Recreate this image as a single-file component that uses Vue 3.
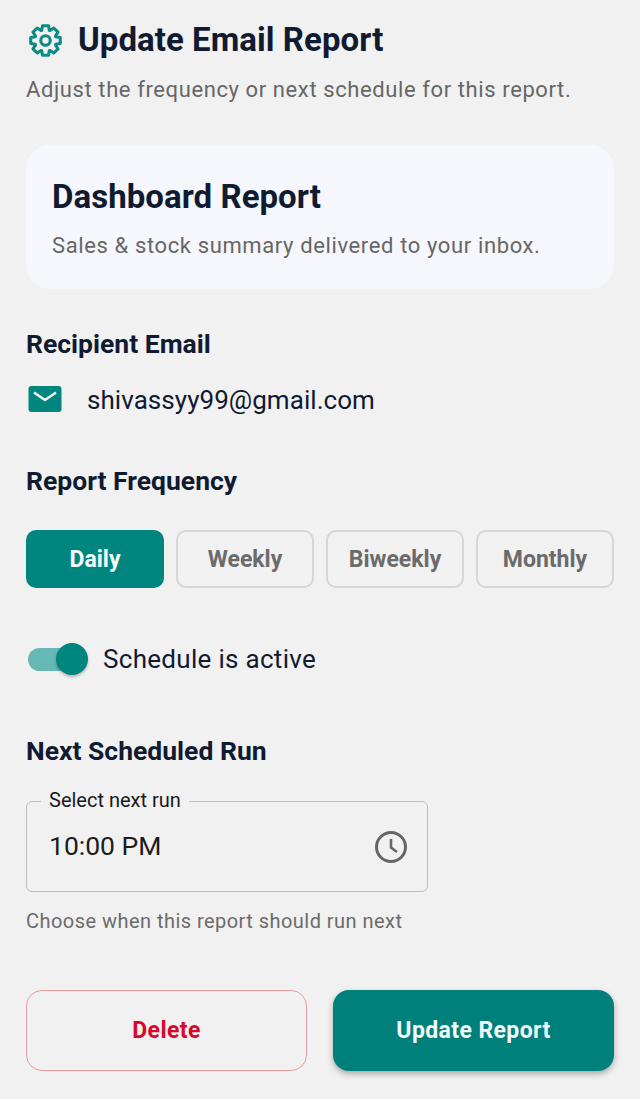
<script setup>
import { ref } from 'vue';

const frequencies = ref(['Daily', 'Weekly', 'Biweekly', 'Monthly']);
const selected = ref('Daily');

// 8 squarish teeth round the centre of a 34 x 34 box
const gearPoints = Array.from({ length: 8 }, (_, i) => {
  const a = (i * Math.PI) / 4;
  return [
    [-0.36, 10.6],
    [-0.2, 14.6],
    [0.2, 14.6],
    [0.36, 10.6]
  ].map(([da, r]) => {
    const x = 17 + r * Math.sin(a + da);
    const y = 17 - r * Math.cos(a + da);
    return `${x.toFixed(2)},${y.toFixed(2)}`;
  }).join(' ');
}).join(' ');
</script>

<template>
  <main class="page">
    <header class="head">
      <svg class="gear" viewBox="0 0 34 34" fill="none" stroke="#0d8a84" stroke-width="3" stroke-linejoin="round">
        <polygon :points="gearPoints" />
        <circle cx="17" cy="17" r="4.6" />
      </svg>
      <h1>Update Email Report</h1>
    </header>
    <p class="sub">Adjust the frequency or next schedule for this report.</p>

    <section class="card">
      <h2>Dashboard Report</h2>
      <p>Sales &amp; stock summary delivered to your inbox.</p>
    </section>

    <h3 class="label first">Recipient Email</h3>
    <div class="email">
      <svg class="mail" viewBox="0 0 34 28">
        <rect x="0.5" y="1" width="33" height="26" rx="3" fill="#00857f" />
        <path d="M6 7.5l11 7.5 11-7.5" fill="none" stroke="#f1f1f1" stroke-width="2.6" />
      </svg>
      <span>shivassyy99@gmail.com</span>
    </div>

    <h3 class="label freq">Report Frequency</h3>
    <div class="chips">
      <button v-for="f in frequencies" :key="f" class="chip" :class="{ on: f === selected }">{{ f }}</button>
    </div>

    <div class="toggle">
      <span class="switch"><span class="knob"></span></span>
      <span class="toggle-text">Schedule is active</span>
    </div>

    <h3 class="label next">Next Scheduled Run</h3>
    <div class="field">
      <span class="legend">Select next run</span>
      <span class="value">10:00 PM</span>
      <svg class="clock" viewBox="0 0 34 34" fill="none" stroke="#666" stroke-width="3">
        <circle cx="17" cy="17" r="14.5" />
        <path d="M17 9v8.5l6 4.5" stroke-width="2.6" />
      </svg>
    </div>
    <p class="hint">Choose when this report should run next</p>

    <div class="actions">
      <button class="btn delete">Delete</button>
      <button class="btn update">Update Report</button>
    </div>
  </main>
</template>

<style>
html,
body {
  background: #f1f1f1;
}
</style>

<style scoped>
.page {
  box-sizing: border-box;
  height: 1099px;
  padding: 0 26px;
  font-family: Roboto, 'Liberation Sans', sans-serif;
  color: #101a31;
  background: #f1f1f1;
  overflow: hidden;
}

.head {
  display: flex;
  align-items: center;
  gap: 15px;
  padding-top: 20px;
  height: 40px;
}

.gear {
  width: 35px;
  height: 35px;
  flex: none;
  margin-left: 2px;
}

h1 {
  margin: 0;
  font-size: 33px;
  font-weight: 700;
  line-height: 40px;
  letter-spacing: 0.05px;
}

.sub {
  margin: 15px 0 0;
  font-size: 22px;
  line-height: 30px;
  color: #666;
  letter-spacing: 0.6px;
}

.card {
  box-sizing: border-box;
  height: 144px;
  margin-top: 40px;
  padding: 32px 26px 0;
  background: #f5f7fc;
  border-radius: 24px;
}

.card h2 {
  margin: 0;
  font-size: 33px;
  line-height: 40px;
  font-weight: 700;
  letter-spacing: 0.05px;
}

.card p {
  margin: 14px 0 0;
  font-size: 22px;
  line-height: 30px;
  color: #666;
  letter-spacing: 0.62px;
}

.label {
  margin: 0;
  font-size: 26.5px;
  line-height: 34px;
  font-weight: 700;
}

.first {
  margin-top: 38px;
}

.email {
  display: flex;
  align-items: center;
  gap: 25px;
  margin-top: 21px;
  height: 36px;
  font-size: 26px;
  letter-spacing: 0.05px;
}

.mail {
  width: 34px;
  height: 28px;
  flex: none;
  margin: -2px 0 0 2px;
}

.freq {
  margin-top: 46px;
}

.chips {
  display: grid;
  grid-template-columns: repeat(4, 1fr);
  gap: 12px;
  margin-top: 32px;
}

.chip {
  height: 58px;
  padding: 0;
  border: 2.5px solid #d6d6d6;
  border-radius: 10px;
  background: transparent;
  color: #6b6b6b;
  font: 700 23px Roboto, sans-serif;
}

.chip.on {
  border-color: #00857f;
  background: #00857f;
  color: #f4fbfa;
}

.toggle {
  display: flex;
  align-items: center;
  gap: 16px;
  margin-top: 54px;
  height: 34px;
}

.switch {
  position: relative;
  display: block;
  width: 59px;
  height: 23px;
  margin-left: 2px;
  border-radius: 12px;
  background: #66b8b4;
}

.knob {
  position: absolute;
  top: -4.5px;
  right: -1px;
  width: 32px;
  height: 32px;
  border-radius: 50%;
  background: #00857f;
  box-shadow: 0 2px 3px rgba(0, 0, 0, 0.25);
}

.toggle-text {
  font-size: 26px;
  letter-spacing: 0.3px;
}

.next {
  margin-top: 58px;
}

.field {
  position: relative;
  box-sizing: border-box;
  display: flex;
  align-items: center;
  justify-content: space-between;
  width: 402px;
  height: 91px;
  margin-top: 33px;
  padding: 0 19px 2px 22px;
  border: 1.5px solid #bdbdbd;
  border-radius: 6px;
}

.legend {
  position: absolute;
  top: -15px;
  left: 14px;
  padding: 0 8px;
  background: #f1f1f1;
  font-size: 20px;
  line-height: 26px;
  color: #1a1a1a;
}

.value {
  font-size: 26.5px;
  color: #1c1c1c;
}

.clock {
  width: 34px;
  height: 34px;
  margin-top: 2px;
}

.hint {
  margin: 16px 0 0;
  font-size: 20px;
  line-height: 26px;
  color: #6b6b6b;
  letter-spacing: 0.46px;
}

.actions {
  display: grid;
  grid-template-columns: 1fr 1fr;
  gap: 26px;
  margin-top: 56px;
}

.btn {
  height: 81px;
  border-radius: 16px;
  font: 700 23px Roboto, sans-serif;
  letter-spacing: 0.4px;
}

.delete {
  background: transparent;
  border: 1.5px solid #e89a9f;
  color: #d9082a;
}

.update {
  border: 0;
  background: #00807b;
  color: #f1faf9;
  box-shadow: 0 3px 6px rgba(0, 0, 0, 0.3);
}
</style>
